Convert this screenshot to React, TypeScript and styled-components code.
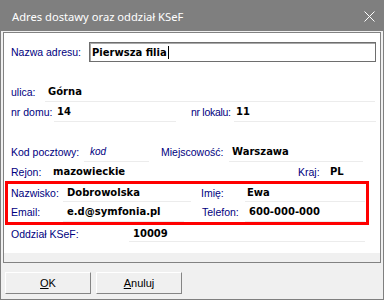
import React from "react";
import styled, { createGlobalStyle } from "styled-components";

const Global = createGlobalStyle`
  html, body { margin: 0; padding: 0; background: #ffffff; }
  body { width: 384px; height: 300px; overflow: hidden; }
  * { box-sizing: border-box; }
`;

const Window = styled.div`
  width: 384px;
  height: 300px;
  background: #f0f0f0;
  border: 1px solid #7f7f7f;
  display: flex;
  flex-direction: column;
`;

const TitleBar = styled.div`
  height: 30px;
  flex: none;
  background: #7f7f7f;
  color: #ffffff;
  display: flex;
  align-items: center;
  justify-content: space-between;
  padding: 0 8px 0 11px;
  font-family: "Noto Sans", sans-serif;
  font-size: 11.2px;
`;

const CloseIcon = styled.svg`
  width: 11px;
  height: 11px;
  display: block;
`;

const Body = styled.div`
  flex: 1;
  display: flex;
  flex-direction: column;
  padding: 1px 2px 0 2px;
`;

const Panel = styled.div`
  height: 231px;
  flex: none;
  border: 1px solid #828282;
  background: #f0f0f0;
  display: flex;
  flex-direction: column;
`;

const Content = styled.div`
  height: 220px;
  flex: none;
  background: #ffffff;
  display: flex;
  flex-direction: column;
  padding-top: 9px;
`;

const Row = styled.div<{ $h: number; $mt?: number; $pl?: number }>`
  height: ${(p) => p.$h}px;
  margin-top: ${(p) => p.$mt ?? 0}px;
  padding-left: ${(p) => p.$pl ?? 7}px;
  flex: none;
  display: flex;
  align-items: stretch;
`;

const Label = styled.div<{ $w: number; $ml?: number; $ls?: number }>`
  width: ${(p) => p.$w}px;
  margin-left: ${(p) => p.$ml ?? 0}px;
  letter-spacing: ${(p) => p.$ls ?? 0}px;
  flex: none;
  display: flex;
  align-items: center;
  font-family: "Liberation Sans", Arial, sans-serif;
  font-size: 10.5px;
  color: #000080;
  white-space: nowrap;
`;

const Field = styled.div<{ $w: number; $pad?: number; $line?: boolean }>`
  width: ${(p) => p.$w}px;
  flex: none;
  display: flex;
  align-items: center;
  padding-left: ${(p) => p.$pad ?? 3}px;
  border-bottom: 1px solid ${(p) => (p.$line === false ? "transparent" : "#ececec")};
  font-family: "DejaVu Sans", sans-serif;
  font-weight: bold;
  font-size: 10px;
  color: #000000;
  white-space: nowrap;
`;

const Placeholder = styled.span`
  font-family: "Liberation Sans", Arial, sans-serif;
  font-style: italic;
  font-weight: normal;
  font-size: 10px;
  color: #000080;
`;

const Input = styled.div`
  width: 287px;
  flex: none;
  display: flex;
  align-items: center;
  padding-left: 2px;
  border: 1px solid #6e6e6e;
  box-shadow: inset 1px 1px 0 #a8a8a8;
  font-family: "DejaVu Sans", sans-serif;
  font-weight: bold;
  font-size: 10px;
  color: #000000;
`;

const Caret = styled.span`
  display: inline-block;
  width: 1px;
  height: 13px;
  background: #000000;
  margin-left: 1px;
`;

const Group = styled.div`
  width: 364px;
  height: 44px;
  margin-left: 1px;
  flex: none;
  border: 3px solid #ff0000;
  display: flex;
  flex-direction: column;
`;

const Strip = styled.div`
  flex: 1;
  background: #f0f0f0;
`;

const ButtonBar = styled.div`
  display: flex;
  gap: 5px;
  margin-top: 9px;
  padding-left: 2px;
`;

const Button = styled.div`
  width: 86px;
  height: 22px;
  background: #f0f0f0;
  border-top: 1px solid #ffffff;
  border-left: 1px solid #ffffff;
  border-right: 1px solid #858585;
  border-bottom: 1px solid #858585;
  display: flex;
  align-items: center;
  justify-content: center;
  font-family: "Liberation Sans", Arial, sans-serif;
  font-size: 11px;
  color: #000000;
`;

const Key = styled.span`
  text-decoration: underline;
`;

export default function App() {
  return (
    <>
      <Global />
      <Window>
        <TitleBar>
          <span>Adres dostawy oraz oddział KSeF</span>
          <CloseIcon viewBox="0 0 11 11">
            <path d="M0.5 0.5 L10.5 10.5 M10.5 0.5 L0.5 10.5" stroke="#ffffff" strokeWidth="1" />
          </CloseIcon>
        </TitleBar>
        <Body>
          <Panel>
            <Content>
              <Row $h={20}>
                <Label $w={78}>Nazwa adresu:</Label>
                <Input>
                  Pierwsza filia
                  <Caret />
                </Input>
              </Row>
              <Row $h={20} $mt={20}>
                <Label $w={34}>ulica:</Label>
                <Field $w={330}>Górna</Field>
              </Row>
              <Row $h={20}>
                <Label $w={43}>nr domu:</Label>
                <Field $w={122}>14</Field>
                <Label $w={43} $ml={15} $ls={-0.3}>nr lokalu:</Label>
                <Field $w={142} $pad={2}>11</Field>
              </Row>
              <Row $h={20} $mt={20}>
                <Label $w={73}>Kod pocztowy:</Label>
                <Field $w={65} $pad={6}>
                  <Placeholder>kod</Placeholder>
                </Field>
                <Label $w={68} $ml={12}>Miejscowość:</Label>
                <Field $w={134}>Warszawa</Field>
              </Row>
              <Row $h={19}>
                <Label $w={39}>Rejon:</Label>
                <Field $w={245} $line={false}>mazowieckie</Field>
                <Label $w={29} $ml={3}>Kraj:</Label>
                <Field $w={48} $line={false}>PL</Field>
              </Row>
              <Group>
                <Row $h={18} $pl={3}>
                  <Label $w={52}>Nazwisko:</Label>
                  <Field $w={128} $pad={4}>Dobrowolska</Field>
                  <Label $w={44} $ml={10}>Imię:</Label>
                  <Field $w={120} $pad={2}>Ewa</Field>
                </Row>
                <Row $h={20} $pl={3}>
                  <Label $w={52}>Email:</Label>
                  <Field $w={121} $pad={4}>e.d@symfonia.pl</Field>
                  <Label $w={43} $ml={18}>Telefon:</Label>
                  <Field $w={120} $pad={4}>600-000-000</Field>
                </Row>
              </Group>
              <Row $h={17}>
                <Label $w={118}>Oddział KSeF:</Label>
                <Field $w={236} $pad={4}>10009</Field>
              </Row>
            </Content>
            <Strip />
          </Panel>
          <ButtonBar>
            <Button>
              <span>
                <Key>O</Key>K
              </span>
            </Button>
            <Button>
              <span>
                <Key>A</Key>nuluj
              </span>
            </Button>
          </ButtonBar>
        </Body>
      </Window>
    </>
  );
}
